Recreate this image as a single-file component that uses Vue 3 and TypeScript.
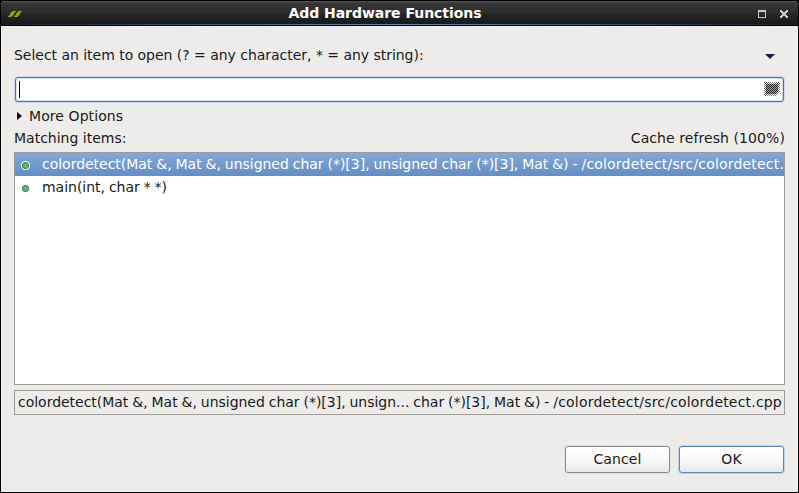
<script setup lang="ts">
import { ref } from 'vue'

interface Item {
  signature: string
  path?: string
}

const items: Item[] = [
  {
    signature: 'colordetect(Mat &, Mat &, unsigned char (*)[3], unsigned char (*)[3], Mat &) - ',
    path: '/colordetect/src/colordetect.cpp',
  },
  { signature: 'main(int, char * *)' },
]
const selected = ref(0)
const status: Item = {
  signature: 'colordetect(Mat &, Mat &, unsigned char (*)[3], unsign... char (*)[3], Mat &) - ',
  path: '/colordetect/src/colordetect.cpp',
}

// Checkerboard of single pixels, used for the stippled clear icon
function checker(x0: number, y0: number, x1: number, y1: number, cut: number): string {
  let d = ''
  for (let y = y0; y < y1; y++) {
    for (let x = x0; x < x1; x++) {
      if ((x + y) % 2 === 0 && x + y < cut) d += `M${x} ${y}h1v1h-1z`
    }
  }
  return d
}
const outer = checker(0, 0, 16, 14, 26)
const inner = checker(2, 2, 14, 12, 23)
</script>

<template>
  <div class="window">
    <header class="titlebar">
      <svg class="logo" width="14" height="6" viewBox="0 0 14 6" shape-rendering="crispEdges">
        <path d="M4 0h4v1H7v1H6v2H5v1H4v1H0V5h1V4h1V2h1V1h1zM10 0h4v1h-1v1h-1v2h-1v1h-1v1H6V5h1V4h1V2h1V1h1z" fill="#96960f" />
      </svg>
      <h1 class="title">Add Hardware Functions</h1>
      <svg class="controls" width="32" height="10" viewBox="0 0 32 10" shape-rendering="crispEdges">
        <path d="M0 1h8v8H0zM1 3v5h6V3z" fill="#c8c8c8" fill-rule="evenodd" />
        <path d="M22 1h2v1h1v1h2V2h1V1h2v2h-1v1h-1v2h1v1h1v2h-2V8h-1V7h-2v1h-1v1h-2V7h1V6h1V4h-1V3h-1z" fill="#c8c8c8" />
      </svg>
    </header>
    <main class="body">
      <div class="row prompt">
        <span class="prompt-text">Select an item to open (? = any character, * = any string):</span>
        <svg class="menu" width="10" height="5" viewBox="0 0 10 5"><path d="M0 0h10L5 5z" fill="#241c40" /></svg>
      </div>
      <div class="field">
        <span class="caret"></span>
        <svg class="clear" width="16" height="14" viewBox="0 0 16 14" shape-rendering="crispEdges">
          <path d="M2 2h12v7l-3 3H2z" fill="#a4a4a4" />
          <path :d="outer" fill="#707070" />
          <path :d="inner" fill="#222" />
        </svg>
      </div>
      <div class="row options">
        <svg width="5" height="8" viewBox="0 0 5 8"><path d="M0 0l5 4-5 4z" fill="#000" /></svg>
        <span class="options-text">More Options</span>
      </div>
      <div class="row matching">
        <span class="matching-text">Matching items:</span>
        <span class="cache-text">Cache refresh (100%)</span>
      </div>
      <ul class="list">
        <li v-for="(item, i) in items" :key="i" class="item" :class="{ selected: selected === i }" @click="selected = i">
          <svg class="dot" width="10" height="10" viewBox="0 0 10 10">
            <circle v-if="selected === i" cx="5.5" cy="4.5" r="4.6" fill="#fff" />
            <circle cx="5.5" cy="4.5" r="3.1" fill="#66b27b" stroke="#16803f" />
          </svg>
          <span class="item-text"><span class="signature">{{ item.signature }}</span><span v-if="item.path" class="path">{{ item.path }}</span></span>
        </li>
      </ul>
      <div class="status"><span class="signature">{{ status.signature }}</span><span class="path">{{ status.path }}</span></div>
      <footer class="buttons">
        <button class="button" type="button">Cancel</button>
        <button class="button primary" type="button">OK</button>
      </footer>
    </main>
  </div>
</template>

<style>
body {
  margin: 0;
  background: #000;
  overflow: hidden;
}
</style>

<style scoped>
.window {
  box-sizing: border-box;
  width: 799px;
  height: 493px;
  border: 1px solid #000;
  border-radius: 5px 5px 0 0;
  background: #edecea;
  color: #1a1a1a;
  font: 14px/16px 'DejaVu Sans', sans-serif;
  white-space: nowrap;
  overflow: hidden;
}
.titlebar {
  box-sizing: border-box;
  display: flex;
  align-items: center;
  height: 25px;
  padding: 0 8px 0 7px;
  background:
    linear-gradient(90deg, #16202c, #5f88bb 50%, #16202c) 0 23px / 100% 1px no-repeat,
    linear-gradient(#5a5a5a 0, #404040 1px, #363636 3px, #2d2d2d 12px, #262626 13px, #191919 23px, #000 24px);
}
.logo {
  margin-top: 1px;
}
.title {
  flex: 1;
  margin: -1px 0 0;
  padding-right: 10px;
  font-size: 14px;
  letter-spacing: -0.04px;
  line-height: 23px;
  text-align: center;
  color: #fff;
}
.body {
  padding: 21px 13px 0;
}
.row {
  display: flex;
  align-items: center;
  justify-content: space-between;
}
.prompt {
  height: 16px;
  padding-right: 10px;
}
.prompt-text {
  letter-spacing: -0.03px;
}
.menu {
  margin-top: 3px;
}
.field {
  box-sizing: border-box;
  display: flex;
  align-items: center;
  justify-content: space-between;
  height: 25px;
  margin: 14px 1px 0;
  padding: 0 3px;
  border: 1px solid #4673a8;
  border-radius: 3px;
  background: #fff;
  box-shadow: 0 0 0 1px #c9d7e8, inset 0 0 0 1px #d7e2ef;
}
.caret {
  width: 1px;
  height: 17px;
  background: #000;
}
.clear {
  margin-top: -1px;
}
.options {
  justify-content: flex-start;
  gap: 7px;
  height: 16px;
  margin-top: 6px;
  padding-left: 3px;
}
.options-text {
  letter-spacing: 0.08px;
}
.matching {
  height: 16px;
  margin-top: 6px;
}
.cache-text {
  letter-spacing: 0.08px;
}
.list {
  box-sizing: border-box;
  height: 233px;
  margin: 6px 0 0;
  padding: 0;
  border: 1px solid #9d9994;
  background: #fff;
  list-style: none;
  overflow: hidden;
}
.item {
  display: flex;
  align-items: center;
  gap: 12px;
  height: 23px;
  padding-left: 5px;
}
.item-text {
  margin-top: -1px;
}
.dot {
  flex: none;
  margin-top: 2px;
}
.selected {
  background: linear-gradient(#83a8d8, #648dc2);
  color: #fff;
}
.signature {
  white-space: pre;
  letter-spacing: -0.02px;
  word-spacing: -0.5px;
}
.path {
  letter-spacing: 0.19px;
}
.status {
  box-sizing: border-box;
  height: 25px;
  margin-top: 5px;
  padding: 3px;
  border: 1px solid #a09d98;
}
.buttons {
  display: flex;
  justify-content: flex-end;
  gap: 9px;
  margin: 31px 1px 0 0;
}
.button {
  width: 105px;
  height: 27px;
  padding: 0 0 1px;
  border: 1px solid #8b8986;
  border-radius: 3px;
  background: linear-gradient(#fff, #fafafa 45%, #e9e8e7);
  box-shadow: 0 0 0 1px #e2e1df;
  color: #1a1a1a;
  font: inherit;
  letter-spacing: 0.12px;
}
.primary {
  border-color: #5c85b8;
  box-shadow: 0 0 0 1px #c0d1e5;
}
</style>
